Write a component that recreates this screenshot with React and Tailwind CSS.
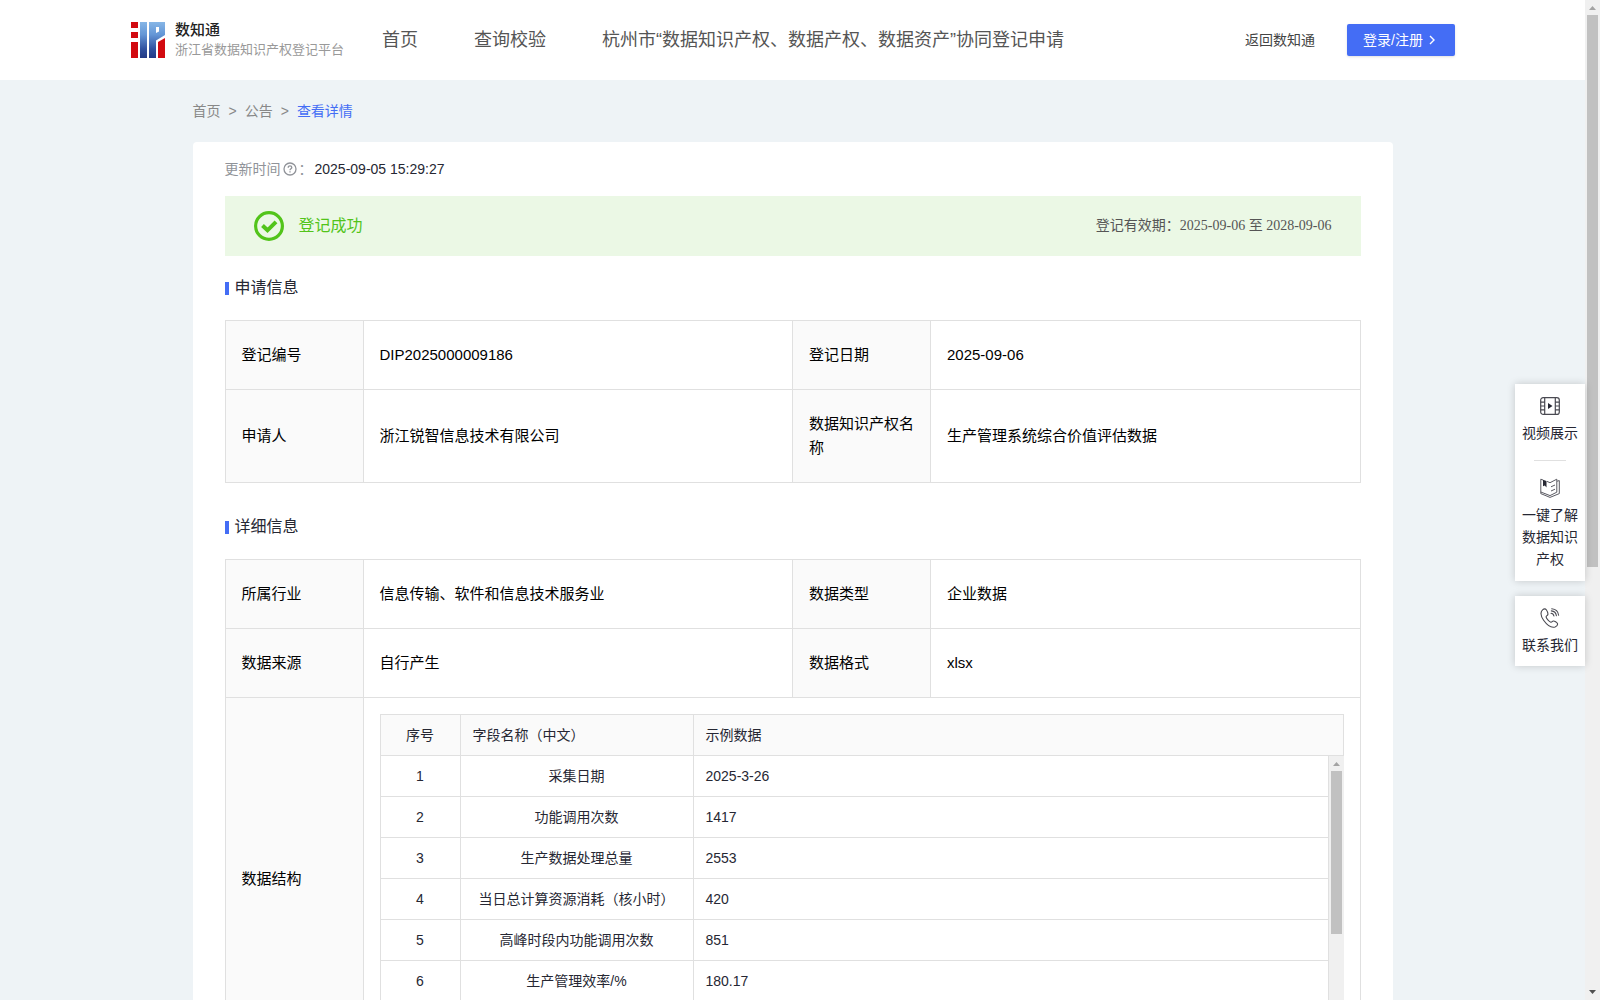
const rows = [
  ["1", "采集日期", "2025-3-26"],
  ["2", "功能调用次数", "1417"],
  ["3", "生产数据处理总量", "2553"],
  ["4", "当日总计算资源消耗（核小时）", "420"],
  ["5", "高峰时段内功能调用次数", "851"],
  ["6", "生产管理效率/%", "180.17"],
];

function Logo() {
  return (
    <svg width="34" height="36" viewBox="0 0 34 36" aria-hidden="true">
      <defs>
        <linearGradient id="logoBlue" x1="0" y1="0" x2="0" y2="1">
          <stop offset="0" stopColor="#86b6e6" />
          <stop offset="0.35" stopColor="#6496d6" />
          <stop offset="0.75" stopColor="#30519f" />
          <stop offset="1" stopColor="#233a86" />
        </linearGradient>
      </defs>
      <g fill="#d20a10">
        <rect x="0" y="0" width="7" height="6" />
        <rect x="0" y="10" width="7" height="6" />
        <rect x="0" y="20" width="7" height="16" />
        <path d="M27 20 34 16V36H27Z" />
      </g>
      <path d="M9 0h7v36H9zM18 0h16v13L25 18.500v17.500h-7zM25 5v6l3-1.500V5z" fill="url(#logoBlue)" fillRule="evenodd" />
    </svg>
  );
}

function HelpIcon() {
  return (
    <svg width="14" height="14" viewBox="0 0 14 14" fill="none" stroke="#909399" strokeWidth="1.3" aria-hidden="true">
      <circle cx="7" cy="7" r="6" />
      <path d="M5.200 5.700C5.200 4.500 6 3.900 7 3.900s1.800.7 1.800 1.600C8.800 6.800 7 6.800 7 8.300M7 9.300v1.200" />
    </svg>
  );
}

function SuccessIcon() {
  return (
    <svg width="30" height="30" viewBox="0 0 30 30" fill="none" stroke="#52c41a" aria-hidden="true">
      <circle cx="15" cy="15" r="13.400" strokeWidth="3.200" />
      <path d="M8.500 14.500 13.500 19.300 22 10.800" strokeWidth="4" />
    </svg>
  );
}

function VideoIcon() {
  return (
    <svg width="20" height="20" viewBox="0 0 20 20" fill="none" stroke="#4a4a52" strokeWidth="1.200" aria-hidden="true">
      <rect x="0.700" y="1.600" width="18.600" height="16.800" rx="2.500" />
      <path d="M4.700 1.600v16.800M15.300 1.600v16.800M.7 6.200h4M.7 10h4M.7 13.800h4M15.300 6.200h4M15.300 10h4M15.300 13.800h4" />
      <path d="M8 7v6l4.500-3z" fill="#262733" stroke="none" />
    </svg>
  );
}

function BookIcon() {
  return (
    <svg width="20" height="20" viewBox="0 0 20 20" fill="none" stroke="#5a5a62" strokeWidth="1" aria-hidden="true">
      <path d="M7 3.400 10 4.700 16.800 1.200v13L10 17.600 .8 14V1.200L3 2" />
      <path d="M17 3.200l2.300-.6v13L10 19.400 .8 15.600V14" />
      <path d="M11 8.800l4-1.800M11 13l4-1.800" />
      <path d="M3 1.800 6.500 3.100V9.500L4.800 7.600 3 8.200z" fill="#262733" stroke="none" />
    </svg>
  );
}

function PhoneIcon() {
  return (
    <svg width="20" height="20" viewBox="0 0 20 20" fill="none" stroke="#4a4a52" strokeWidth="1.100" strokeLinecap="round" aria-hidden="true">
      <path d="M6.300 1.800C5.500.6 4 .6 2.800 1.700.4 3.800.3 7.400 3.600 12.200c3.600 5 8.200 7.800 11.500 6.700 1.600-.6 2.700-1.900 2.400-3.200-.3-1.100-3.200-3.100-4.400-2.700-1 .3-1.200 1.500-2.300 1.200C9 13.700 6.300 10.500 6.100 8.900c-.1-1.100 1.500-1.300 1.800-2.400.2-1-.7-3.400-1.600-4.700z" />
      <path d="M11 5.200c1.700.2 2.700 1.200 2.900 2.800M11.300 2.900c2.900.3 4.800 2.200 5.100 4.900M11.700.8c3.800.4 6.500 2.900 6.900 6.400" />
    </svg>
  );
}

function Scrollbar({ thumb, down }) {
  return (
    <div className="flex w-[15px] shrink-0 flex-col items-center bg-[#f0f0f0]" aria-hidden="true">
      <svg className="shrink-0" width="15" height="15" viewBox="0 0 15 15">
        <path d="M4 10h7L7.500 6z" fill="#a3a3a3" />
      </svg>
      <div className={thumb + " w-[11px] bg-[#c1c1c1]"} />
      {down && (
        <svg className="mt-auto shrink-0" width="15" height="15" viewBox="0 0 15 15">
          <path d="M4 5h7L7.500 9z" fill="#505050" />
        </svg>
      )}
    </div>
  );
}

function SectionTitle({ children }) {
  return (
    <h2 className="flex h-16 items-center gap-1.5 text-base text-[#262733]">
      <span className="h-[13px] w-1 bg-[#446df5]" />
      {children}
    </h2>
  );
}

function Label({ children }) {
  return (
    <th scope="row" className="border border-[#e0e0e0] bg-[#fafafa] px-4 py-[22px] text-left font-normal">
      {children}
    </th>
  );
}

function Value({ children }) {
  return <td className="border border-[#e0e0e0] px-4 py-[22px]">{children}</td>;
}

function InfoTable({ children }) {
  return (
    <table className="w-full table-fixed border-collapse text-[15px] leading-6 text-black">
      <colgroup>
        <col className="w-[138px]" />
        <col />
        <col className="w-[138px]" />
        <col />
      </colgroup>
      <tbody>{children}</tbody>
    </table>
  );
}

function FieldCols() {
  return (
    <colgroup>
      <col className="w-20" />
      <col className="w-[233px]" />
      <col />
    </colgroup>
  );
}

function FieldTable() {
  return (
    <div className="text-sm leading-5 text-[#262733]">
      <table className="w-full table-fixed border-collapse">
        <FieldCols />
        <thead>
          <tr className="h-[41px] bg-[#fafafa]">
            <th className="border border-[#e0e0e0] text-center font-normal">序号</th>
            <th className="border border-[#e0e0e0] px-3 text-left font-normal">字段名称（中文）</th>
            <th className="border border-[#e0e0e0] px-3 text-left font-normal">示例数据</th>
          </tr>
        </thead>
      </table>
      <div className="flex h-[288px] overflow-hidden">
        <table className="h-fit min-w-0 flex-1 table-fixed border-collapse">
          <FieldCols />
          <tbody>
            {rows.map(([n, name, sample]) => (
              <tr key={n} className="h-[41px] first:h-10">
                <td className="border border-t-0 border-[#e0e0e0] text-center">{n}</td>
                <td className="border border-t-0 border-[#e0e0e0] px-3 text-center">{name}</td>
                <td className="border border-t-0 border-[#e0e0e0] px-3">{sample}</td>
              </tr>
            ))}
          </tbody>
        </table>
        <Scrollbar thumb="h-[163px]" />
      </div>
    </div>
  );
}

export default function App() {
  return (
    <div className="flex h-screen bg-[#eef3f6] font-['Liberation_Sans','Noto_Sans_CJK_SC',sans-serif]">
      <div className="relative min-w-0 flex-1">
        <div className="h-full overflow-y-auto [scrollbar-width:none]">
          <header className="flex h-20 items-center bg-white pr-[130px] pl-[131px]">
            <a href="#home" className="flex items-center gap-2.5">
              <Logo />
              <span className="flex flex-col">
                <span className="text-[15px] leading-5 font-medium text-[#222]">数知通</span>
                <span className="text-[13px] leading-5 text-[#999]">浙江省数据知识产权登记平台</span>
              </span>
            </a>
            <nav className="ml-[38px] flex gap-14 text-lg text-[#555]">
              <a href="#home">首页</a>
              <a href="#query">查询校验</a>
              <a href="#apply">杭州市“数据知识产权、数据产权、数据资产”协同登记申请</a>
            </nav>
            <a href="#back" className="ml-auto text-sm text-[#444]">返回数知通</a>
            <button className="ml-8 flex h-8 w-[108px] items-center gap-1 rounded-xs bg-[#446df5] pl-4 text-sm text-white shadow-sm">
              登录/注册
              <svg width="10" height="10" viewBox="0 0 10 10" fill="none" stroke="currentColor" strokeWidth="1.400" aria-hidden="true">
                <path d="M3 1 7 5 3 9" />
              </svg>
            </button>
          </header>

          <main className="mx-auto max-w-[1200px]">
            <nav className="flex h-[62px] items-center gap-2 text-sm text-[#888]">
              <a href="#home">首页</a>
              <span>&gt;</span>
              <a href="#notice">公告</a>
              <span>&gt;</span>
              <a href="#detail" className="text-[#446df5]">查看详情</a>
            </nav>
            <section className="rounded bg-white px-8 pb-8">
              <div className="flex h-[54px] items-center text-sm text-[#262733]">
                <span className="mr-0.5 flex items-center gap-0.5 text-[#909399]">
                  更新时间
                  <HelpIcon />
                  ：
                </span>
                <time>2025-09-05 15:29:27</time>
              </div>
              <div className="flex h-[60px] items-center bg-[#ebf8e5] px-[29px]">
                <SuccessIcon />
                <span className="ml-[15px] text-base text-[#52c41a]">登记成功</span>
                <span className="ml-auto font-['Liberation_Serif','Noto_Sans_CJK_SC',serif] text-sm text-[#555]">
                  登记有效期：2025-09-06 至 2028-09-06
                </span>
              </div>

              <SectionTitle>申请信息</SectionTitle>
              <InfoTable>
                <tr>
                  <Label>登记编号</Label>
                  <Value>DIP2025000009186</Value>
                  <Label>登记日期</Label>
                  <Value>2025-09-06</Value>
                </tr>
                <tr>
                  <Label>申请人</Label>
                  <Value>浙江锐智信息技术有限公司</Value>
                  <Label>数据知识产权名称</Label>
                  <Value>生产管理系统综合价值评估数据</Value>
                </tr>
              </InfoTable>

              <div className="mt-3">
                <SectionTitle>详细信息</SectionTitle>
              </div>
              <InfoTable>
                <tr>
                  <Label>所属行业</Label>
                  <Value>信息传输、软件和信息技术服务业</Value>
                  <Label>数据类型</Label>
                  <Value>企业数据</Value>
                </tr>
                <tr>
                  <Label>数据来源</Label>
                  <Value>自行产生</Value>
                  <Label>数据格式</Label>
                  <Value>xlsx</Value>
                </tr>
                <tr>
                  <Label>数据结构</Label>
                  <td colSpan={3} className="border border-[#e0e0e0] p-4">
                    <FieldTable />
                  </td>
                </tr>
              </InfoTable>
            </section>
          </main>
        </div>

        <aside className="absolute top-96 right-0 flex w-[70px] flex-col gap-[15px] text-center text-sm leading-[22px] text-[#262733]">
          <div className="bg-white px-[7px] pt-3 pb-[11px] shadow-[0_0_8px_rgba(0,0,0,0.18)]">
            <a href="#video" className="flex flex-col items-center gap-1.5">
              <VideoIcon />
              视频展示
            </a>
            <hr className="mx-auto mt-4 mb-[17px] w-8 border-[#e0e0e0]" />
            <a href="#learn" className="flex flex-col items-center gap-1.5">
              <BookIcon />
              一键了解数据知识产权
            </a>
          </div>
          <a href="#contact" className="flex flex-col items-center gap-1.5 bg-white pt-3 pb-2.5 shadow-[0_0_8px_rgba(0,0,0,0.18)]">
            <PhoneIcon />
            联系我们
          </a>
        </aside>
      </div>
      <Scrollbar thumb="h-[552px]" down />
    </div>
  );
}
